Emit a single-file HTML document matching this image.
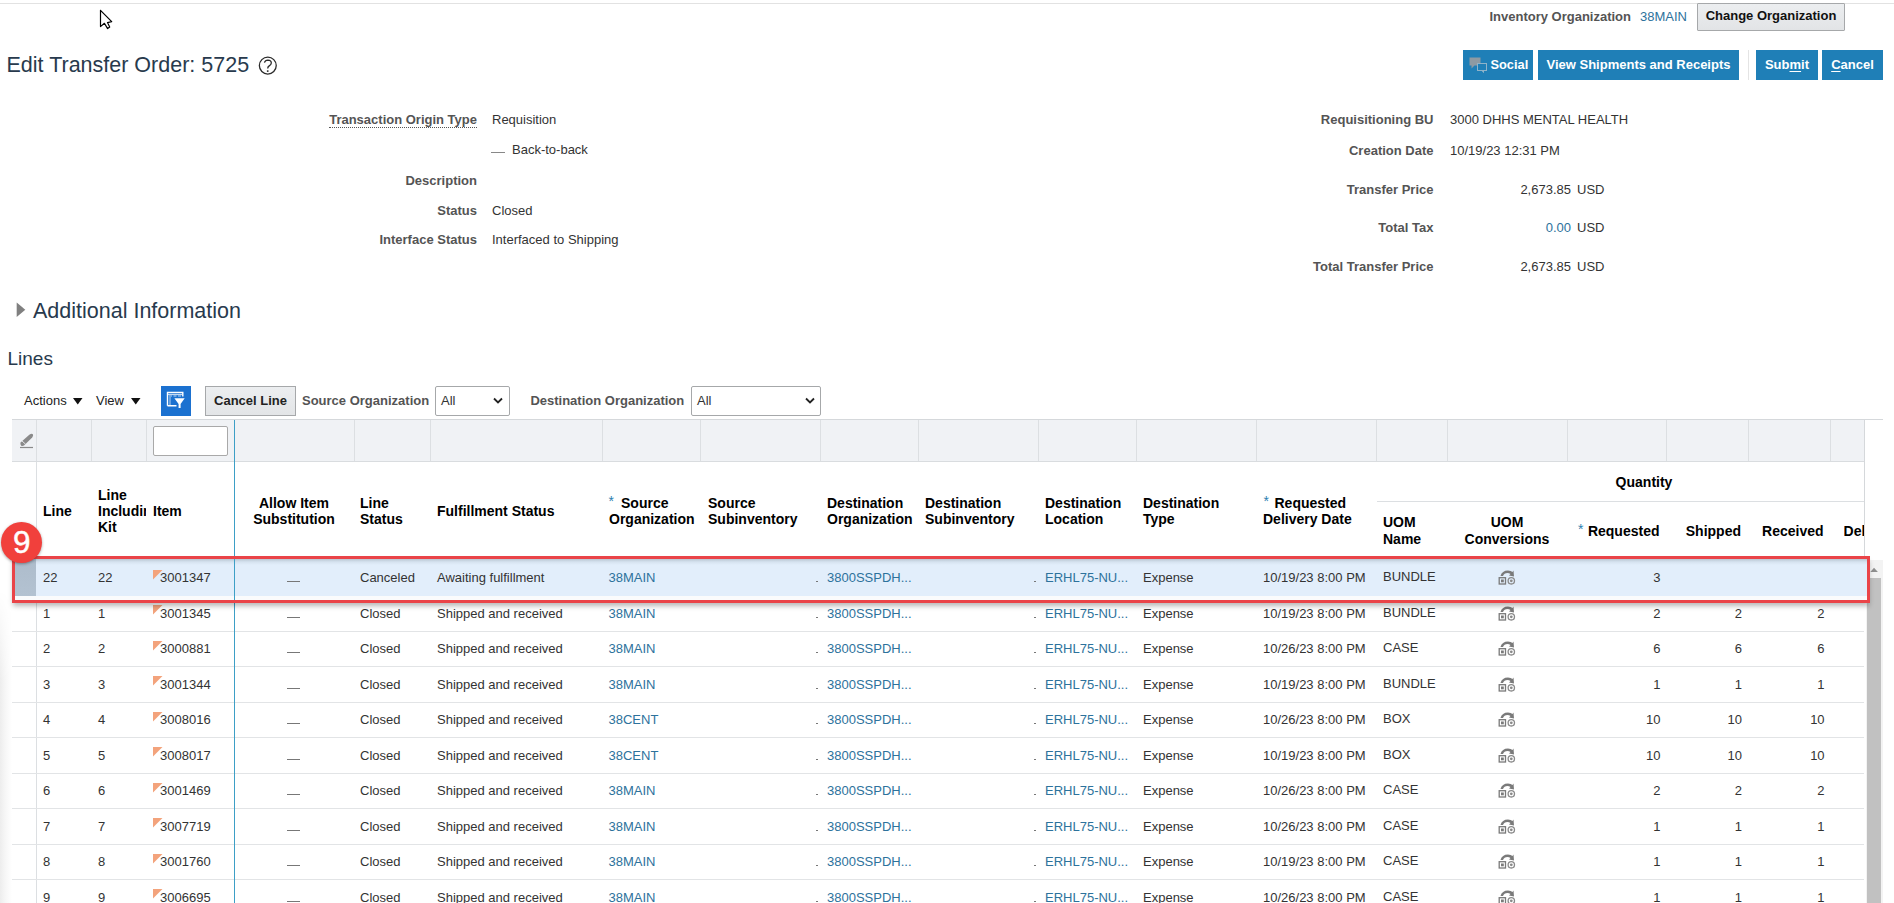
<!DOCTYPE html>
<html><head><meta charset="utf-8"><title>Edit Transfer Order</title>
<style>
html,body{margin:0;padding:0;}
body{width:1894px;height:903px;overflow:hidden;background:#fff;position:relative;font-family:"Liberation Sans", sans-serif;}
.t{position:absolute;white-space:nowrap;line-height:1.1172;}
u{text-decoration:underline;text-underline-offset:2px}
</style></head><body>
<div style="position:absolute;left:0px;top:3px;width:1894px;height:1px;background:#e2e2e2"></div>
<svg style="position:absolute;left:99px;top:9px" width="16" height="22" viewBox="0 0 16 22"><path d="M1.5 1.3 L1.5 17.6 L5.4 14.3 L8.6 19.6 L10.7 18 L8.5 13.6 L12.7 12.7 Z" fill="#fff" stroke="#000" stroke-width="1.2" stroke-linejoin="round"/></svg>
<div class="t" style="left:6.5px;top:53.00px;font-size:21.5px;font-weight:normal;color:#283a4d;line-height:24px;">Edit Transfer Order: 5725</div>
<svg style="position:absolute;left:257px;top:55px" width="22" height="22" viewBox="0 0 22 22"><circle cx="10.8" cy="10.6" r="8.45" fill="none" stroke="#2b2b2b" stroke-width="1.3"/><path d="M7.4 7.6 Q8.2 5.1 10.9 5.1 Q14.3 5.2 14.3 8 Q14.3 9.6 12.2 10.9 Q10.7 11.8 10.7 13.6" fill="none" stroke="#2b2b2b" stroke-width="1.3"/><rect x="9.9" y="15.3" width="1.6" height="1.6" fill="#2b2b2b"/></svg>
<div class="t" style="left:1031px;width:600px;text-align:right;top:9.00px;font-size:13px;font-weight:bold;color:#545454;line-height:15px;">Inventory Organization</div>
<div class="t" style="left:1640px;top:9.00px;font-size:13px;font-weight:normal;color:#2d729c;line-height:15px;">38MAIN</div>
<div style="position:absolute;left:1697px;top:3px;width:146px;height:26px;background:linear-gradient(#eceef0,#e2e4e6);border:1px solid #a6a8aa;border-radius:1px"></div>
<div class="t" style="left:1471px;width:600px;text-align:center;top:8.00px;font-size:13px;font-weight:bold;color:#111;line-height:15px;">Change Organization</div>
<div style="position:absolute;left:1463px;top:50px;width:70px;height:30px;background:#1f7fb7"></div>
<div style="position:absolute;left:1538px;top:50px;width:201px;height:30px;background:#1f7fb7"></div>
<div class="t" style="left:1338.5px;width:600px;text-align:center;top:57.00px;font-size:13px;font-weight:bold;color:#fff;line-height:15px;">View Shipments and Receipts</div>
<div style="position:absolute;left:1756px;top:50px;width:62px;height:30px;background:#1f7fb7"></div>
<div class="t" style="left:1487.0px;width:600px;text-align:center;top:57.00px;font-size:13px;font-weight:bold;color:#fff;line-height:15px;">Sub<u>m</u>it</div>
<div style="position:absolute;left:1822px;top:50px;width:61px;height:30px;background:#1f7fb7"></div>
<div class="t" style="left:1552.5px;width:600px;text-align:center;top:57.00px;font-size:13px;font-weight:bold;color:#fff;line-height:15px;"><u>C</u>ancel</div>
<div class="t" style="left:1490.5px;top:57.00px;font-size:12.8px;font-weight:bold;color:#fff;line-height:15px;">Social</div>
<svg style="position:absolute;left:1468px;top:56px" width="20" height="18" viewBox="0 0 20 18"><path d="M1.5 1.5 h11 v8 h-6 l-3 3 v-3 h-2 z" fill="#8d9aa3"/><rect x="9.5" y="7.5" width="9" height="7" fill="#1f7fb7" stroke="#8fb3c9" stroke-width="1"/><path d="M14 14.5 l1.5 2 l0 -2" fill="none" stroke="#8fb3c9" stroke-width="1"/></svg>
<div style="position:absolute;left:1748px;top:50px;width:1px;height:30px;background:#e4e4e4"></div>
<div class="t" style="left:-123px;width:600px;text-align:right;top:112.00px;font-size:13px;font-weight:bold;color:#545454;line-height:15px;"><span style="border-bottom:1px dotted #555">Transaction Origin Type</span></div>
<div class="t" style="left:-123px;width:600px;text-align:right;top:173.00px;font-size:13px;font-weight:bold;color:#545454;line-height:15px;">Description</div>
<div class="t" style="left:-123px;width:600px;text-align:right;top:203.00px;font-size:13px;font-weight:bold;color:#545454;line-height:15px;">Status</div>
<div class="t" style="left:-123px;width:600px;text-align:right;top:232.00px;font-size:13px;font-weight:bold;color:#545454;line-height:15px;">Interface Status</div>
<div class="t" style="left:492px;top:112.00px;font-size:13px;font-weight:normal;color:#333;line-height:15px;">Requisition</div>
<div style="position:absolute;left:491px;top:152px;width:14px;height:1px;background:#888"></div>
<div class="t" style="left:512px;top:142.00px;font-size:13px;font-weight:normal;color:#333;line-height:15px;">Back-to-back</div>
<div class="t" style="left:492px;top:203.00px;font-size:13px;font-weight:normal;color:#333;line-height:15px;">Closed</div>
<div class="t" style="left:492px;top:232.00px;font-size:13px;font-weight:normal;color:#333;line-height:15px;">Interfaced to Shipping</div>
<div class="t" style="left:833.5px;width:600px;text-align:right;top:112.00px;font-size:13px;font-weight:bold;color:#545454;line-height:15px;">Requisitioning BU</div>
<div class="t" style="left:833.5px;width:600px;text-align:right;top:143.00px;font-size:13px;font-weight:bold;color:#545454;line-height:15px;">Creation Date</div>
<div class="t" style="left:833.5px;width:600px;text-align:right;top:182.00px;font-size:13px;font-weight:bold;color:#545454;line-height:15px;">Transfer Price</div>
<div class="t" style="left:833.5px;width:600px;text-align:right;top:220.00px;font-size:13px;font-weight:bold;color:#545454;line-height:15px;">Total Tax</div>
<div class="t" style="left:833.5px;width:600px;text-align:right;top:259.00px;font-size:13px;font-weight:bold;color:#545454;line-height:15px;">Total Transfer Price</div>
<div class="t" style="left:1450px;top:112.00px;font-size:13px;font-weight:normal;color:#333;line-height:15px;">3000 DHHS MENTAL HEALTH</div>
<div class="t" style="left:1450px;top:143.00px;font-size:13px;font-weight:normal;color:#333;line-height:15px;">10/19/23 12:31 PM</div>
<div class="t" style="left:971px;width:600px;text-align:right;top:182.00px;font-size:13px;font-weight:normal;color:#333;line-height:15px;">2,673.85</div>
<div class="t" style="left:1577px;top:182.00px;font-size:13px;font-weight:normal;color:#333;line-height:15px;">USD</div>
<div class="t" style="left:971px;width:600px;text-align:right;top:220.00px;font-size:13px;font-weight:normal;color:#2d729c;line-height:15px;">0.00</div>
<div class="t" style="left:1577px;top:220.00px;font-size:13px;font-weight:normal;color:#333;line-height:15px;">USD</div>
<div class="t" style="left:971px;width:600px;text-align:right;top:259.00px;font-size:13px;font-weight:normal;color:#333;line-height:15px;">2,673.85</div>
<div class="t" style="left:1577px;top:259.00px;font-size:13px;font-weight:normal;color:#333;line-height:15px;">USD</div>
<svg style="position:absolute;left:15px;top:302px" width="12" height="17"><path d="M1.7 0.4 L10.3 7.7 L1.7 15 Z" fill="#808080"/></svg>
<div class="t" style="left:33px;top:299.00px;font-size:21.5px;font-weight:normal;color:#283a4d;line-height:24px;">Additional Information</div>
<div class="t" style="left:7.5px;top:348.00px;font-size:19px;font-weight:normal;color:#283a4d;line-height:21px;">Lines</div>
<div class="t" style="left:24px;top:393.00px;font-size:13px;font-weight:normal;color:#222;line-height:15px;">Actions</div>
<svg style="position:absolute;left:73px;top:398px" width="10" height="7"><path d="M0 0 H9.5 L4.75 6.6 Z" fill="#111"/></svg>
<div class="t" style="left:96px;top:393.00px;font-size:13px;font-weight:normal;color:#222;line-height:15px;">View</div>
<svg style="position:absolute;left:130.5px;top:398px" width="10" height="7"><path d="M0 0 H9.5 L4.75 6.6 Z" fill="#111"/></svg>
<div style="position:absolute;left:161px;top:386px;width:30px;height:30px;background:#1b71d0"></div>
<svg style="position:absolute;left:161px;top:386px" width="30" height="30" viewBox="0 0 30 30"><path d="M6.5 19.8 V6.5 H21.8 V10.5 M6.5 19.8 H15.5" fill="none" stroke="#fff" stroke-width="1.4"/><path d="M7 8.6 h14" stroke="#e6f0fb" stroke-width="0.9"/><path d="M8 10 h3 M12.5 10 h3 M17 10 h3 M8 12 h2 M8 14 h2 M8 16 h2 M8 18 h2" stroke="#cfe2f7" stroke-width="0.9"/><path d="M13.4 12.2 h10.3 l-4.1 5.7 v4 h-2 v-4 z" fill="#fff"/></svg>
<div style="position:absolute;left:205px;top:386px;width:89px;height:28px;background:linear-gradient(#eceef0,#e3e5e7);border:1px solid #a6a8aa;"></div>
<div class="t" style="left:-49.5px;width:600px;text-align:center;top:393.00px;font-size:13px;font-weight:bold;color:#222;line-height:15px;">Cancel Line</div>
<div class="t" style="left:302px;top:393.00px;font-size:13px;font-weight:bold;color:#545454;line-height:15px;">Source Organization</div>
<div style="position:absolute;left:435px;top:386px;width:73px;height:28px;background:#fff;border:1px solid #a6a8aa;border-radius:2px"></div>
<div class="t" style="left:441px;top:393.00px;font-size:13px;font-weight:normal;color:#333;line-height:15px;">All</div>
<svg style="position:absolute;left:493px;top:397px" width="10" height="8"><path d="M1 1.5 L5 5.5 L9 1.5" fill="none" stroke="#222" stroke-width="1.8"/></svg>
<div class="t" style="left:530.4px;top:393.00px;font-size:13px;font-weight:bold;color:#545454;line-height:15px;">Destination Organization</div>
<div style="position:absolute;left:691px;top:386px;width:128px;height:28px;background:#fff;border:1px solid #a6a8aa;border-radius:2px"></div>
<div class="t" style="left:697px;top:393.00px;font-size:13px;font-weight:normal;color:#333;line-height:15px;">All</div>
<svg style="position:absolute;left:805px;top:397px" width="10" height="8"><path d="M1 1.5 L5 5.5 L9 1.5" fill="none" stroke="#222" stroke-width="1.8"/></svg>
<div style="position:absolute;left:0px;top:590px;width:12px;height:313px;background:linear-gradient(90deg,#ededed,#f6f6f6 5px,#fff 12px);-webkit-mask-image:linear-gradient(to bottom,transparent,#000 90px)"></div>
<div style="position:absolute;left:12px;top:419px;width:1871px;height:1px;background:#d5d8db"></div>
<div style="position:absolute;left:12px;top:420px;width:1852px;height:41px;background:#f0f2f5"></div>
<div style="position:absolute;left:12px;top:461px;width:1852px;height:1px;background:#d9dcdf"></div>
<div style="position:absolute;left:36px;top:420px;width:1px;height:41px;background:#dcdfe2"></div>
<div style="position:absolute;left:91px;top:420px;width:1px;height:41px;background:#dcdfe2"></div>
<div style="position:absolute;left:146px;top:420px;width:1px;height:41px;background:#dcdfe2"></div>
<div style="position:absolute;left:354px;top:420px;width:1px;height:41px;background:#dcdfe2"></div>
<div style="position:absolute;left:430px;top:420px;width:1px;height:41px;background:#dcdfe2"></div>
<div style="position:absolute;left:602px;top:420px;width:1px;height:41px;background:#dcdfe2"></div>
<div style="position:absolute;left:700px;top:420px;width:1px;height:41px;background:#dcdfe2"></div>
<div style="position:absolute;left:820px;top:420px;width:1px;height:41px;background:#dcdfe2"></div>
<div style="position:absolute;left:918px;top:420px;width:1px;height:41px;background:#dcdfe2"></div>
<div style="position:absolute;left:1038px;top:420px;width:1px;height:41px;background:#dcdfe2"></div>
<div style="position:absolute;left:1136px;top:420px;width:1px;height:41px;background:#dcdfe2"></div>
<div style="position:absolute;left:1256px;top:420px;width:1px;height:41px;background:#dcdfe2"></div>
<div style="position:absolute;left:1376px;top:420px;width:1px;height:41px;background:#dcdfe2"></div>
<div style="position:absolute;left:1447px;top:420px;width:1px;height:41px;background:#dcdfe2"></div>
<div style="position:absolute;left:1567px;top:420px;width:1px;height:41px;background:#dcdfe2"></div>
<div style="position:absolute;left:1666px;top:420px;width:1px;height:41px;background:#dcdfe2"></div>
<div style="position:absolute;left:1748px;top:420px;width:1px;height:41px;background:#dcdfe2"></div>
<div style="position:absolute;left:1830px;top:420px;width:1px;height:41px;background:#dcdfe2"></div>
<div style="position:absolute;left:1864px;top:420px;width:1px;height:137px;background:#d5d8db"></div>
<svg style="position:absolute;left:19px;top:432px" width="16" height="17" viewBox="0 0 16 17"><path d="M1.6 10.6 L10.3 2.7 Q12.6 1.2 13.9 2.2 Q14.6 3.6 13.2 5.6 L5 13.6 Q3.3 14.6 2 13.5 Q1 12.2 1.6 10.6 Z" fill="#8a8a8a"/><path d="M2.6 8.6 L6.6 12.2" stroke="#f0f2f5" stroke-width="0.9"/><rect x="1" y="14.9" width="13" height="1.2" fill="#8a8a8a"/></svg>
<div style="position:absolute;left:153px;top:426px;width:73px;height:28px;background:#fff;border:1px solid #a9a9a9;border-radius:2px"></div>
<div style="position:absolute;left:36px;top:462px;width:1px;height:441px;background:#dcdfe2"></div>
<div class="t" style="left:43px;top:503.00px;font-size:14px;font-weight:bold;color:#000;line-height:16px;">Line</div>
<div style="position:absolute;left:98px;top:478px;width:48px;overflow:hidden;height:60px">
<div class="t" style="left:0px;top:calc(-478px + 487.00px);font-size:14px;font-weight:bold;color:#000;line-height:16px;">Line</div>
<div class="t" style="left:0px;top:calc(-478px + 503.00px);font-size:14px;font-weight:bold;color:#000;line-height:16px;">Including</div>
<div class="t" style="left:0px;top:calc(-478px + 519.00px);font-size:14px;font-weight:bold;color:#000;line-height:16px;">Kit</div>
</div>
<div class="t" style="left:153px;top:503.00px;font-size:14px;font-weight:bold;color:#000;line-height:16px;">Item</div>
<div class="t" style="left:-6px;width:600px;text-align:center;top:495.00px;font-size:14px;font-weight:bold;color:#000;line-height:16px;">Allow Item</div>
<div class="t" style="left:-6px;width:600px;text-align:center;top:511.00px;font-size:14px;font-weight:bold;color:#000;line-height:16px;">Substitution</div>
<div class="t" style="left:360px;top:495.00px;font-size:14px;font-weight:bold;color:#000;line-height:16px;">Line</div>
<div class="t" style="left:360px;top:511.00px;font-size:14px;font-weight:bold;color:#000;line-height:16px;">Status</div>
<div class="t" style="left:437px;top:503.00px;font-size:14px;font-weight:bold;color:#000;line-height:16px;">Fulfillment Status</div>
<div class="t" style="left:621px;top:495.00px;font-size:14px;font-weight:bold;color:#000;line-height:16px;">Source</div>
<div class="t" style="left:621px;top:511.00px;font-size:14px;font-weight:bold;color:#000;line-height:16px;"></div>
<div class="t" style="left:609px;top:511.00px;font-size:14px;font-weight:bold;color:#000;line-height:16px;">Organization</div>
<div class="t" style="left:608.5px;top:493.00px;font-size:14px;font-weight:normal;color:#2c7fb0;line-height:16px;">*</div>
<div class="t" style="left:708px;top:495.00px;font-size:14px;font-weight:bold;color:#000;line-height:16px;">Source</div>
<div class="t" style="left:708px;top:511.00px;font-size:14px;font-weight:bold;color:#000;line-height:16px;">Subinventory</div>
<div class="t" style="left:827px;top:495.00px;font-size:14px;font-weight:bold;color:#000;line-height:16px;">Destination</div>
<div class="t" style="left:827px;top:511.00px;font-size:14px;font-weight:bold;color:#000;line-height:16px;">Organization</div>
<div class="t" style="left:925px;top:495.00px;font-size:14px;font-weight:bold;color:#000;line-height:16px;">Destination</div>
<div class="t" style="left:925px;top:511.00px;font-size:14px;font-weight:bold;color:#000;line-height:16px;">Subinventory</div>
<div class="t" style="left:1045px;top:495.00px;font-size:14px;font-weight:bold;color:#000;line-height:16px;">Destination</div>
<div class="t" style="left:1045px;top:511.00px;font-size:14px;font-weight:bold;color:#000;line-height:16px;">Location</div>
<div class="t" style="left:1143px;top:495.00px;font-size:14px;font-weight:bold;color:#000;line-height:16px;">Destination</div>
<div class="t" style="left:1143px;top:511.00px;font-size:14px;font-weight:bold;color:#000;line-height:16px;">Type</div>
<div class="t" style="left:1274.5px;top:495.00px;font-size:14px;font-weight:bold;color:#000;line-height:16px;">Requested</div>
<div class="t" style="left:1263px;top:511.00px;font-size:14px;font-weight:bold;color:#000;line-height:16px;">Delivery Date</div>
<div class="t" style="left:1263.5px;top:493.00px;font-size:14px;font-weight:normal;color:#2c7fb0;line-height:16px;">*</div>
<div class="t" style="left:1344px;width:600px;text-align:center;top:474.00px;font-size:14px;font-weight:bold;color:#000;line-height:16px;">Quantity</div>
<div style="position:absolute;left:1377px;top:501px;width:487px;height:1px;background:#dcdfe2"></div>
<div class="t" style="left:1383px;top:514.00px;font-size:14px;font-weight:bold;color:#000;line-height:16px;">UOM</div>
<div class="t" style="left:1383px;top:531.00px;font-size:14px;font-weight:bold;color:#000;line-height:16px;">Name</div>
<div class="t" style="left:1207px;width:600px;text-align:center;top:514.00px;font-size:14px;font-weight:bold;color:#000;line-height:16px;">UOM</div>
<div class="t" style="left:1207px;width:600px;text-align:center;top:531.00px;font-size:14px;font-weight:bold;color:#000;line-height:16px;">Conversions</div>
<div class="t" style="left:1059.5px;width:600px;text-align:right;top:523.00px;font-size:14px;font-weight:bold;color:#000;line-height:16px;">Requested</div>
<div class="t" style="left:1578px;top:521.00px;font-size:14px;font-weight:normal;color:#2c7fb0;line-height:16px;">*</div>
<div class="t" style="left:1141px;width:600px;text-align:right;top:523.00px;font-size:14px;font-weight:bold;color:#000;line-height:16px;">Shipped</div>
<div class="t" style="left:1223.6px;width:600px;text-align:right;top:523.00px;font-size:14px;font-weight:bold;color:#000;line-height:16px;">Received</div>
<div style="position:absolute;left:1843.6px;top:520px;width:20.4px;overflow:hidden;height:20px">
<div class="t" style="left:0px;top:3.00px;font-size:14px;font-weight:bold;color:#000;line-height:16px;">Del</div>
</div>
<div style="position:absolute;left:1866px;top:560px;width:17px;height:343px;background:#f3f3f3"></div>
<svg style="position:absolute;left:1869px;top:566px" width="12" height="8"><path d="M1.3 6 L5 1.8 L8.9 6 Z" fill="#8f8f8f"/></svg>
<div style="position:absolute;left:1867px;top:578px;width:14px;height:325px;background:#c1c1c1"></div>
<div style="position:absolute;left:15px;top:559px;width:1852px;height:36.5px;background:linear-gradient(#b9c6d2 0px,#d6e3f0 3px,#e2eefb 6px,#e2eefb 100%)"></div>
<div style="position:absolute;left:15px;top:559px;width:21px;height:36.5px;background:linear-gradient(#9fb0c0,#aebdcc 5px,#b3c2d1)"></div>
<div style="position:absolute;left:15px;top:595.5px;width:1852px;height:4.5px;background:#fafbfc"></div>
<div style="position:absolute;left:12px;top:631px;width:1852px;height:1px;background:#e2e4e6"></div>
<div style="position:absolute;left:12px;top:666px;width:1852px;height:1px;background:#e2e4e6"></div>
<div style="position:absolute;left:12px;top:702px;width:1852px;height:1px;background:#e2e4e6"></div>
<div style="position:absolute;left:12px;top:737px;width:1852px;height:1px;background:#e2e4e6"></div>
<div style="position:absolute;left:12px;top:773px;width:1852px;height:1px;background:#e2e4e6"></div>
<div style="position:absolute;left:12px;top:808px;width:1852px;height:1px;background:#e2e4e6"></div>
<div style="position:absolute;left:12px;top:844px;width:1852px;height:1px;background:#e2e4e6"></div>
<div style="position:absolute;left:12px;top:879px;width:1852px;height:1px;background:#e2e4e6"></div>
<div class="t" style="left:43px;top:570.00px;font-size:13px;font-weight:normal;color:#333;line-height:15px;">22</div>
<div class="t" style="left:98px;top:570.00px;font-size:13px;font-weight:normal;color:#333;line-height:15px;">22</div>
<svg style="position:absolute;left:153px;top:569.80px" width="10" height="10"><path d="M0 0 H9.5 L0 9.5 Z" fill="#f3a37c"/></svg>
<div class="t" style="left:160px;top:570.00px;font-size:13px;font-weight:normal;color:#333;line-height:15px;">3001347</div>
<div style="position:absolute;left:287px;top:581.3px;width:13px;height:1.0px;background:#777"></div>
<div class="t" style="left:360px;top:570.00px;font-size:13px;font-weight:normal;color:#333;line-height:15px;">Canceled</div>
<div class="t" style="left:437px;top:570.00px;font-size:13px;font-weight:normal;color:#333;line-height:15px;">Awaiting fulfillment</div>
<div class="t" style="left:608.5px;top:570.00px;font-size:13px;font-weight:normal;color:#2d729c;line-height:15px;">38MAIN</div>
<div style="position:absolute;left:816px;top:581.3px;width:2px;height:1.0px;background:#777"></div>
<div class="t" style="left:827px;top:570.00px;font-size:13px;font-weight:normal;color:#2d729c;line-height:15px;">3800SSPDH...</div>
<div style="position:absolute;left:1034px;top:581.3px;width:2px;height:1.0px;background:#777"></div>
<div class="t" style="left:1045px;top:570.00px;font-size:13px;font-weight:normal;color:#2d729c;line-height:15px;">ERHL75-NU...</div>
<div class="t" style="left:1143px;top:570.00px;font-size:13px;font-weight:normal;color:#333;line-height:15px;">Expense</div>
<div class="t" style="left:1263px;top:570.00px;font-size:13px;font-weight:normal;color:#333;line-height:15px;">10/19/23 8:00 PM</div>
<div class="t" style="left:1383px;top:569.00px;font-size:13px;font-weight:normal;color:#333;line-height:15px;">BUNDLE</div>
<svg style="position:absolute;left:1497.5px;top:569.00px" width="18" height="16" viewBox="0 0 18 16"><path d="M2.5 7 Q4 1.5 10 1.5 Q13 1.5 14.5 3 L15.5 1.5 L16 7.5 L11 6.5 L12.5 5 Q11 4 9.5 4 Q6 4 5 7 Z" fill="#7a7a7a"/><rect x="1.2" y="8.7" width="6.3" height="6.3" fill="none" stroke="#7a7a7a" stroke-width="1.3"/><rect x="3" y="10.5" width="2.8" height="2.8" fill="#7a7a7a"/><circle cx="13.3" cy="11.8" r="3.2" fill="none" stroke="#8a8a8a" stroke-width="1.3"/><circle cx="13.3" cy="11.8" r="1.4" fill="#8a8a8a"/></svg>
<div class="t" style="left:1060.5px;width:600px;text-align:right;top:570.00px;font-size:13px;font-weight:normal;color:#333;line-height:15px;">3</div>
<div class="t" style="left:1142px;width:600px;text-align:right;top:570.00px;font-size:13px;font-weight:normal;color:#333;line-height:15px;"></div>
<div class="t" style="left:1224.6px;width:600px;text-align:right;top:570.00px;font-size:13px;font-weight:normal;color:#333;line-height:15px;"></div>
<div class="t" style="left:43px;top:606.00px;font-size:13px;font-weight:normal;color:#333;line-height:15px;">1</div>
<div class="t" style="left:98px;top:606.00px;font-size:13px;font-weight:normal;color:#333;line-height:15px;">1</div>
<svg style="position:absolute;left:153px;top:605.30px" width="10" height="10"><path d="M0 0 H9.5 L0 9.5 Z" fill="#f3a37c"/></svg>
<div class="t" style="left:160px;top:606.00px;font-size:13px;font-weight:normal;color:#333;line-height:15px;">3001345</div>
<div style="position:absolute;left:287px;top:616.8px;width:13px;height:1.0px;background:#777"></div>
<div class="t" style="left:360px;top:606.00px;font-size:13px;font-weight:normal;color:#333;line-height:15px;">Closed</div>
<div class="t" style="left:437px;top:606.00px;font-size:13px;font-weight:normal;color:#333;line-height:15px;">Shipped and received</div>
<div class="t" style="left:608.5px;top:606.00px;font-size:13px;font-weight:normal;color:#2d729c;line-height:15px;">38MAIN</div>
<div style="position:absolute;left:816px;top:616.8px;width:2px;height:1.0px;background:#777"></div>
<div class="t" style="left:827px;top:606.00px;font-size:13px;font-weight:normal;color:#2d729c;line-height:15px;">3800SSPDH...</div>
<div style="position:absolute;left:1034px;top:616.8px;width:2px;height:1.0px;background:#777"></div>
<div class="t" style="left:1045px;top:606.00px;font-size:13px;font-weight:normal;color:#2d729c;line-height:15px;">ERHL75-NU...</div>
<div class="t" style="left:1143px;top:606.00px;font-size:13px;font-weight:normal;color:#333;line-height:15px;">Expense</div>
<div class="t" style="left:1263px;top:606.00px;font-size:13px;font-weight:normal;color:#333;line-height:15px;">10/19/23 8:00 PM</div>
<div class="t" style="left:1383px;top:605.00px;font-size:13px;font-weight:normal;color:#333;line-height:15px;">BUNDLE</div>
<svg style="position:absolute;left:1497.5px;top:604.50px" width="18" height="16" viewBox="0 0 18 16"><path d="M2.5 7 Q4 1.5 10 1.5 Q13 1.5 14.5 3 L15.5 1.5 L16 7.5 L11 6.5 L12.5 5 Q11 4 9.5 4 Q6 4 5 7 Z" fill="#7a7a7a"/><rect x="1.2" y="8.7" width="6.3" height="6.3" fill="none" stroke="#7a7a7a" stroke-width="1.3"/><rect x="3" y="10.5" width="2.8" height="2.8" fill="#7a7a7a"/><circle cx="13.3" cy="11.8" r="3.2" fill="none" stroke="#8a8a8a" stroke-width="1.3"/><circle cx="13.3" cy="11.8" r="1.4" fill="#8a8a8a"/></svg>
<div class="t" style="left:1060.5px;width:600px;text-align:right;top:606.00px;font-size:13px;font-weight:normal;color:#333;line-height:15px;">2</div>
<div class="t" style="left:1142px;width:600px;text-align:right;top:606.00px;font-size:13px;font-weight:normal;color:#333;line-height:15px;">2</div>
<div class="t" style="left:1224.6px;width:600px;text-align:right;top:606.00px;font-size:13px;font-weight:normal;color:#333;line-height:15px;">2</div>
<div class="t" style="left:43px;top:641.00px;font-size:13px;font-weight:normal;color:#333;line-height:15px;">2</div>
<div class="t" style="left:98px;top:641.00px;font-size:13px;font-weight:normal;color:#333;line-height:15px;">2</div>
<svg style="position:absolute;left:153px;top:640.80px" width="10" height="10"><path d="M0 0 H9.5 L0 9.5 Z" fill="#f3a37c"/></svg>
<div class="t" style="left:160px;top:641.00px;font-size:13px;font-weight:normal;color:#333;line-height:15px;">3000881</div>
<div style="position:absolute;left:287px;top:652.3px;width:13px;height:1.0px;background:#777"></div>
<div class="t" style="left:360px;top:641.00px;font-size:13px;font-weight:normal;color:#333;line-height:15px;">Closed</div>
<div class="t" style="left:437px;top:641.00px;font-size:13px;font-weight:normal;color:#333;line-height:15px;">Shipped and received</div>
<div class="t" style="left:608.5px;top:641.00px;font-size:13px;font-weight:normal;color:#2d729c;line-height:15px;">38MAIN</div>
<div style="position:absolute;left:816px;top:652.3px;width:2px;height:1.0px;background:#777"></div>
<div class="t" style="left:827px;top:641.00px;font-size:13px;font-weight:normal;color:#2d729c;line-height:15px;">3800SSPDH...</div>
<div style="position:absolute;left:1034px;top:652.3px;width:2px;height:1.0px;background:#777"></div>
<div class="t" style="left:1045px;top:641.00px;font-size:13px;font-weight:normal;color:#2d729c;line-height:15px;">ERHL75-NU...</div>
<div class="t" style="left:1143px;top:641.00px;font-size:13px;font-weight:normal;color:#333;line-height:15px;">Expense</div>
<div class="t" style="left:1263px;top:641.00px;font-size:13px;font-weight:normal;color:#333;line-height:15px;">10/26/23 8:00 PM</div>
<div class="t" style="left:1383px;top:640.00px;font-size:13px;font-weight:normal;color:#333;line-height:15px;">CASE</div>
<svg style="position:absolute;left:1497.5px;top:640.00px" width="18" height="16" viewBox="0 0 18 16"><path d="M2.5 7 Q4 1.5 10 1.5 Q13 1.5 14.5 3 L15.5 1.5 L16 7.5 L11 6.5 L12.5 5 Q11 4 9.5 4 Q6 4 5 7 Z" fill="#7a7a7a"/><rect x="1.2" y="8.7" width="6.3" height="6.3" fill="none" stroke="#7a7a7a" stroke-width="1.3"/><rect x="3" y="10.5" width="2.8" height="2.8" fill="#7a7a7a"/><circle cx="13.3" cy="11.8" r="3.2" fill="none" stroke="#8a8a8a" stroke-width="1.3"/><circle cx="13.3" cy="11.8" r="1.4" fill="#8a8a8a"/></svg>
<div class="t" style="left:1060.5px;width:600px;text-align:right;top:641.00px;font-size:13px;font-weight:normal;color:#333;line-height:15px;">6</div>
<div class="t" style="left:1142px;width:600px;text-align:right;top:641.00px;font-size:13px;font-weight:normal;color:#333;line-height:15px;">6</div>
<div class="t" style="left:1224.6px;width:600px;text-align:right;top:641.00px;font-size:13px;font-weight:normal;color:#333;line-height:15px;">6</div>
<div class="t" style="left:43px;top:677.00px;font-size:13px;font-weight:normal;color:#333;line-height:15px;">3</div>
<div class="t" style="left:98px;top:677.00px;font-size:13px;font-weight:normal;color:#333;line-height:15px;">3</div>
<svg style="position:absolute;left:153px;top:676.30px" width="10" height="10"><path d="M0 0 H9.5 L0 9.5 Z" fill="#f3a37c"/></svg>
<div class="t" style="left:160px;top:677.00px;font-size:13px;font-weight:normal;color:#333;line-height:15px;">3001344</div>
<div style="position:absolute;left:287px;top:687.8px;width:13px;height:1.0px;background:#777"></div>
<div class="t" style="left:360px;top:677.00px;font-size:13px;font-weight:normal;color:#333;line-height:15px;">Closed</div>
<div class="t" style="left:437px;top:677.00px;font-size:13px;font-weight:normal;color:#333;line-height:15px;">Shipped and received</div>
<div class="t" style="left:608.5px;top:677.00px;font-size:13px;font-weight:normal;color:#2d729c;line-height:15px;">38MAIN</div>
<div style="position:absolute;left:816px;top:687.8px;width:2px;height:1.0px;background:#777"></div>
<div class="t" style="left:827px;top:677.00px;font-size:13px;font-weight:normal;color:#2d729c;line-height:15px;">3800SSPDH...</div>
<div style="position:absolute;left:1034px;top:687.8px;width:2px;height:1.0px;background:#777"></div>
<div class="t" style="left:1045px;top:677.00px;font-size:13px;font-weight:normal;color:#2d729c;line-height:15px;">ERHL75-NU...</div>
<div class="t" style="left:1143px;top:677.00px;font-size:13px;font-weight:normal;color:#333;line-height:15px;">Expense</div>
<div class="t" style="left:1263px;top:677.00px;font-size:13px;font-weight:normal;color:#333;line-height:15px;">10/19/23 8:00 PM</div>
<div class="t" style="left:1383px;top:676.00px;font-size:13px;font-weight:normal;color:#333;line-height:15px;">BUNDLE</div>
<svg style="position:absolute;left:1497.5px;top:675.50px" width="18" height="16" viewBox="0 0 18 16"><path d="M2.5 7 Q4 1.5 10 1.5 Q13 1.5 14.5 3 L15.5 1.5 L16 7.5 L11 6.5 L12.5 5 Q11 4 9.5 4 Q6 4 5 7 Z" fill="#7a7a7a"/><rect x="1.2" y="8.7" width="6.3" height="6.3" fill="none" stroke="#7a7a7a" stroke-width="1.3"/><rect x="3" y="10.5" width="2.8" height="2.8" fill="#7a7a7a"/><circle cx="13.3" cy="11.8" r="3.2" fill="none" stroke="#8a8a8a" stroke-width="1.3"/><circle cx="13.3" cy="11.8" r="1.4" fill="#8a8a8a"/></svg>
<div class="t" style="left:1060.5px;width:600px;text-align:right;top:677.00px;font-size:13px;font-weight:normal;color:#333;line-height:15px;">1</div>
<div class="t" style="left:1142px;width:600px;text-align:right;top:677.00px;font-size:13px;font-weight:normal;color:#333;line-height:15px;">1</div>
<div class="t" style="left:1224.6px;width:600px;text-align:right;top:677.00px;font-size:13px;font-weight:normal;color:#333;line-height:15px;">1</div>
<div class="t" style="left:43px;top:712.00px;font-size:13px;font-weight:normal;color:#333;line-height:15px;">4</div>
<div class="t" style="left:98px;top:712.00px;font-size:13px;font-weight:normal;color:#333;line-height:15px;">4</div>
<svg style="position:absolute;left:153px;top:711.80px" width="10" height="10"><path d="M0 0 H9.5 L0 9.5 Z" fill="#f3a37c"/></svg>
<div class="t" style="left:160px;top:712.00px;font-size:13px;font-weight:normal;color:#333;line-height:15px;">3008016</div>
<div style="position:absolute;left:287px;top:723.3px;width:13px;height:1.0px;background:#777"></div>
<div class="t" style="left:360px;top:712.00px;font-size:13px;font-weight:normal;color:#333;line-height:15px;">Closed</div>
<div class="t" style="left:437px;top:712.00px;font-size:13px;font-weight:normal;color:#333;line-height:15px;">Shipped and received</div>
<div class="t" style="left:608.5px;top:712.00px;font-size:13px;font-weight:normal;color:#2d729c;line-height:15px;">38CENT</div>
<div style="position:absolute;left:816px;top:723.3px;width:2px;height:1.0px;background:#777"></div>
<div class="t" style="left:827px;top:712.00px;font-size:13px;font-weight:normal;color:#2d729c;line-height:15px;">3800SSPDH...</div>
<div style="position:absolute;left:1034px;top:723.3px;width:2px;height:1.0px;background:#777"></div>
<div class="t" style="left:1045px;top:712.00px;font-size:13px;font-weight:normal;color:#2d729c;line-height:15px;">ERHL75-NU...</div>
<div class="t" style="left:1143px;top:712.00px;font-size:13px;font-weight:normal;color:#333;line-height:15px;">Expense</div>
<div class="t" style="left:1263px;top:712.00px;font-size:13px;font-weight:normal;color:#333;line-height:15px;">10/26/23 8:00 PM</div>
<div class="t" style="left:1383px;top:711.00px;font-size:13px;font-weight:normal;color:#333;line-height:15px;">BOX</div>
<svg style="position:absolute;left:1497.5px;top:711.00px" width="18" height="16" viewBox="0 0 18 16"><path d="M2.5 7 Q4 1.5 10 1.5 Q13 1.5 14.5 3 L15.5 1.5 L16 7.5 L11 6.5 L12.5 5 Q11 4 9.5 4 Q6 4 5 7 Z" fill="#7a7a7a"/><rect x="1.2" y="8.7" width="6.3" height="6.3" fill="none" stroke="#7a7a7a" stroke-width="1.3"/><rect x="3" y="10.5" width="2.8" height="2.8" fill="#7a7a7a"/><circle cx="13.3" cy="11.8" r="3.2" fill="none" stroke="#8a8a8a" stroke-width="1.3"/><circle cx="13.3" cy="11.8" r="1.4" fill="#8a8a8a"/></svg>
<div class="t" style="left:1060.5px;width:600px;text-align:right;top:712.00px;font-size:13px;font-weight:normal;color:#333;line-height:15px;">10</div>
<div class="t" style="left:1142px;width:600px;text-align:right;top:712.00px;font-size:13px;font-weight:normal;color:#333;line-height:15px;">10</div>
<div class="t" style="left:1224.6px;width:600px;text-align:right;top:712.00px;font-size:13px;font-weight:normal;color:#333;line-height:15px;">10</div>
<div class="t" style="left:43px;top:748.00px;font-size:13px;font-weight:normal;color:#333;line-height:15px;">5</div>
<div class="t" style="left:98px;top:748.00px;font-size:13px;font-weight:normal;color:#333;line-height:15px;">5</div>
<svg style="position:absolute;left:153px;top:747.30px" width="10" height="10"><path d="M0 0 H9.5 L0 9.5 Z" fill="#f3a37c"/></svg>
<div class="t" style="left:160px;top:748.00px;font-size:13px;font-weight:normal;color:#333;line-height:15px;">3008017</div>
<div style="position:absolute;left:287px;top:758.8px;width:13px;height:1.0px;background:#777"></div>
<div class="t" style="left:360px;top:748.00px;font-size:13px;font-weight:normal;color:#333;line-height:15px;">Closed</div>
<div class="t" style="left:437px;top:748.00px;font-size:13px;font-weight:normal;color:#333;line-height:15px;">Shipped and received</div>
<div class="t" style="left:608.5px;top:748.00px;font-size:13px;font-weight:normal;color:#2d729c;line-height:15px;">38CENT</div>
<div style="position:absolute;left:816px;top:758.8px;width:2px;height:1.0px;background:#777"></div>
<div class="t" style="left:827px;top:748.00px;font-size:13px;font-weight:normal;color:#2d729c;line-height:15px;">3800SSPDH...</div>
<div style="position:absolute;left:1034px;top:758.8px;width:2px;height:1.0px;background:#777"></div>
<div class="t" style="left:1045px;top:748.00px;font-size:13px;font-weight:normal;color:#2d729c;line-height:15px;">ERHL75-NU...</div>
<div class="t" style="left:1143px;top:748.00px;font-size:13px;font-weight:normal;color:#333;line-height:15px;">Expense</div>
<div class="t" style="left:1263px;top:748.00px;font-size:13px;font-weight:normal;color:#333;line-height:15px;">10/19/23 8:00 PM</div>
<div class="t" style="left:1383px;top:747.00px;font-size:13px;font-weight:normal;color:#333;line-height:15px;">BOX</div>
<svg style="position:absolute;left:1497.5px;top:746.50px" width="18" height="16" viewBox="0 0 18 16"><path d="M2.5 7 Q4 1.5 10 1.5 Q13 1.5 14.5 3 L15.5 1.5 L16 7.5 L11 6.5 L12.5 5 Q11 4 9.5 4 Q6 4 5 7 Z" fill="#7a7a7a"/><rect x="1.2" y="8.7" width="6.3" height="6.3" fill="none" stroke="#7a7a7a" stroke-width="1.3"/><rect x="3" y="10.5" width="2.8" height="2.8" fill="#7a7a7a"/><circle cx="13.3" cy="11.8" r="3.2" fill="none" stroke="#8a8a8a" stroke-width="1.3"/><circle cx="13.3" cy="11.8" r="1.4" fill="#8a8a8a"/></svg>
<div class="t" style="left:1060.5px;width:600px;text-align:right;top:748.00px;font-size:13px;font-weight:normal;color:#333;line-height:15px;">10</div>
<div class="t" style="left:1142px;width:600px;text-align:right;top:748.00px;font-size:13px;font-weight:normal;color:#333;line-height:15px;">10</div>
<div class="t" style="left:1224.6px;width:600px;text-align:right;top:748.00px;font-size:13px;font-weight:normal;color:#333;line-height:15px;">10</div>
<div class="t" style="left:43px;top:783.00px;font-size:13px;font-weight:normal;color:#333;line-height:15px;">6</div>
<div class="t" style="left:98px;top:783.00px;font-size:13px;font-weight:normal;color:#333;line-height:15px;">6</div>
<svg style="position:absolute;left:153px;top:782.80px" width="10" height="10"><path d="M0 0 H9.5 L0 9.5 Z" fill="#f3a37c"/></svg>
<div class="t" style="left:160px;top:783.00px;font-size:13px;font-weight:normal;color:#333;line-height:15px;">3001469</div>
<div style="position:absolute;left:287px;top:794.3px;width:13px;height:1.0px;background:#777"></div>
<div class="t" style="left:360px;top:783.00px;font-size:13px;font-weight:normal;color:#333;line-height:15px;">Closed</div>
<div class="t" style="left:437px;top:783.00px;font-size:13px;font-weight:normal;color:#333;line-height:15px;">Shipped and received</div>
<div class="t" style="left:608.5px;top:783.00px;font-size:13px;font-weight:normal;color:#2d729c;line-height:15px;">38MAIN</div>
<div style="position:absolute;left:816px;top:794.3px;width:2px;height:1.0px;background:#777"></div>
<div class="t" style="left:827px;top:783.00px;font-size:13px;font-weight:normal;color:#2d729c;line-height:15px;">3800SSPDH...</div>
<div style="position:absolute;left:1034px;top:794.3px;width:2px;height:1.0px;background:#777"></div>
<div class="t" style="left:1045px;top:783.00px;font-size:13px;font-weight:normal;color:#2d729c;line-height:15px;">ERHL75-NU...</div>
<div class="t" style="left:1143px;top:783.00px;font-size:13px;font-weight:normal;color:#333;line-height:15px;">Expense</div>
<div class="t" style="left:1263px;top:783.00px;font-size:13px;font-weight:normal;color:#333;line-height:15px;">10/26/23 8:00 PM</div>
<div class="t" style="left:1383px;top:782.00px;font-size:13px;font-weight:normal;color:#333;line-height:15px;">CASE</div>
<svg style="position:absolute;left:1497.5px;top:782.00px" width="18" height="16" viewBox="0 0 18 16"><path d="M2.5 7 Q4 1.5 10 1.5 Q13 1.5 14.5 3 L15.5 1.5 L16 7.5 L11 6.5 L12.5 5 Q11 4 9.5 4 Q6 4 5 7 Z" fill="#7a7a7a"/><rect x="1.2" y="8.7" width="6.3" height="6.3" fill="none" stroke="#7a7a7a" stroke-width="1.3"/><rect x="3" y="10.5" width="2.8" height="2.8" fill="#7a7a7a"/><circle cx="13.3" cy="11.8" r="3.2" fill="none" stroke="#8a8a8a" stroke-width="1.3"/><circle cx="13.3" cy="11.8" r="1.4" fill="#8a8a8a"/></svg>
<div class="t" style="left:1060.5px;width:600px;text-align:right;top:783.00px;font-size:13px;font-weight:normal;color:#333;line-height:15px;">2</div>
<div class="t" style="left:1142px;width:600px;text-align:right;top:783.00px;font-size:13px;font-weight:normal;color:#333;line-height:15px;">2</div>
<div class="t" style="left:1224.6px;width:600px;text-align:right;top:783.00px;font-size:13px;font-weight:normal;color:#333;line-height:15px;">2</div>
<div class="t" style="left:43px;top:819.00px;font-size:13px;font-weight:normal;color:#333;line-height:15px;">7</div>
<div class="t" style="left:98px;top:819.00px;font-size:13px;font-weight:normal;color:#333;line-height:15px;">7</div>
<svg style="position:absolute;left:153px;top:818.30px" width="10" height="10"><path d="M0 0 H9.5 L0 9.5 Z" fill="#f3a37c"/></svg>
<div class="t" style="left:160px;top:819.00px;font-size:13px;font-weight:normal;color:#333;line-height:15px;">3007719</div>
<div style="position:absolute;left:287px;top:829.8px;width:13px;height:1.0px;background:#777"></div>
<div class="t" style="left:360px;top:819.00px;font-size:13px;font-weight:normal;color:#333;line-height:15px;">Closed</div>
<div class="t" style="left:437px;top:819.00px;font-size:13px;font-weight:normal;color:#333;line-height:15px;">Shipped and received</div>
<div class="t" style="left:608.5px;top:819.00px;font-size:13px;font-weight:normal;color:#2d729c;line-height:15px;">38MAIN</div>
<div style="position:absolute;left:816px;top:829.8px;width:2px;height:1.0px;background:#777"></div>
<div class="t" style="left:827px;top:819.00px;font-size:13px;font-weight:normal;color:#2d729c;line-height:15px;">3800SSPDH...</div>
<div style="position:absolute;left:1034px;top:829.8px;width:2px;height:1.0px;background:#777"></div>
<div class="t" style="left:1045px;top:819.00px;font-size:13px;font-weight:normal;color:#2d729c;line-height:15px;">ERHL75-NU...</div>
<div class="t" style="left:1143px;top:819.00px;font-size:13px;font-weight:normal;color:#333;line-height:15px;">Expense</div>
<div class="t" style="left:1263px;top:819.00px;font-size:13px;font-weight:normal;color:#333;line-height:15px;">10/26/23 8:00 PM</div>
<div class="t" style="left:1383px;top:818.00px;font-size:13px;font-weight:normal;color:#333;line-height:15px;">CASE</div>
<svg style="position:absolute;left:1497.5px;top:817.50px" width="18" height="16" viewBox="0 0 18 16"><path d="M2.5 7 Q4 1.5 10 1.5 Q13 1.5 14.5 3 L15.5 1.5 L16 7.5 L11 6.5 L12.5 5 Q11 4 9.5 4 Q6 4 5 7 Z" fill="#7a7a7a"/><rect x="1.2" y="8.7" width="6.3" height="6.3" fill="none" stroke="#7a7a7a" stroke-width="1.3"/><rect x="3" y="10.5" width="2.8" height="2.8" fill="#7a7a7a"/><circle cx="13.3" cy="11.8" r="3.2" fill="none" stroke="#8a8a8a" stroke-width="1.3"/><circle cx="13.3" cy="11.8" r="1.4" fill="#8a8a8a"/></svg>
<div class="t" style="left:1060.5px;width:600px;text-align:right;top:819.00px;font-size:13px;font-weight:normal;color:#333;line-height:15px;">1</div>
<div class="t" style="left:1142px;width:600px;text-align:right;top:819.00px;font-size:13px;font-weight:normal;color:#333;line-height:15px;">1</div>
<div class="t" style="left:1224.6px;width:600px;text-align:right;top:819.00px;font-size:13px;font-weight:normal;color:#333;line-height:15px;">1</div>
<div class="t" style="left:43px;top:854.00px;font-size:13px;font-weight:normal;color:#333;line-height:15px;">8</div>
<div class="t" style="left:98px;top:854.00px;font-size:13px;font-weight:normal;color:#333;line-height:15px;">8</div>
<svg style="position:absolute;left:153px;top:853.80px" width="10" height="10"><path d="M0 0 H9.5 L0 9.5 Z" fill="#f3a37c"/></svg>
<div class="t" style="left:160px;top:854.00px;font-size:13px;font-weight:normal;color:#333;line-height:15px;">3001760</div>
<div style="position:absolute;left:287px;top:865.3px;width:13px;height:1.0px;background:#777"></div>
<div class="t" style="left:360px;top:854.00px;font-size:13px;font-weight:normal;color:#333;line-height:15px;">Closed</div>
<div class="t" style="left:437px;top:854.00px;font-size:13px;font-weight:normal;color:#333;line-height:15px;">Shipped and received</div>
<div class="t" style="left:608.5px;top:854.00px;font-size:13px;font-weight:normal;color:#2d729c;line-height:15px;">38MAIN</div>
<div style="position:absolute;left:816px;top:865.3px;width:2px;height:1.0px;background:#777"></div>
<div class="t" style="left:827px;top:854.00px;font-size:13px;font-weight:normal;color:#2d729c;line-height:15px;">3800SSPDH...</div>
<div style="position:absolute;left:1034px;top:865.3px;width:2px;height:1.0px;background:#777"></div>
<div class="t" style="left:1045px;top:854.00px;font-size:13px;font-weight:normal;color:#2d729c;line-height:15px;">ERHL75-NU...</div>
<div class="t" style="left:1143px;top:854.00px;font-size:13px;font-weight:normal;color:#333;line-height:15px;">Expense</div>
<div class="t" style="left:1263px;top:854.00px;font-size:13px;font-weight:normal;color:#333;line-height:15px;">10/19/23 8:00 PM</div>
<div class="t" style="left:1383px;top:853.00px;font-size:13px;font-weight:normal;color:#333;line-height:15px;">CASE</div>
<svg style="position:absolute;left:1497.5px;top:853.00px" width="18" height="16" viewBox="0 0 18 16"><path d="M2.5 7 Q4 1.5 10 1.5 Q13 1.5 14.5 3 L15.5 1.5 L16 7.5 L11 6.5 L12.5 5 Q11 4 9.5 4 Q6 4 5 7 Z" fill="#7a7a7a"/><rect x="1.2" y="8.7" width="6.3" height="6.3" fill="none" stroke="#7a7a7a" stroke-width="1.3"/><rect x="3" y="10.5" width="2.8" height="2.8" fill="#7a7a7a"/><circle cx="13.3" cy="11.8" r="3.2" fill="none" stroke="#8a8a8a" stroke-width="1.3"/><circle cx="13.3" cy="11.8" r="1.4" fill="#8a8a8a"/></svg>
<div class="t" style="left:1060.5px;width:600px;text-align:right;top:854.00px;font-size:13px;font-weight:normal;color:#333;line-height:15px;">1</div>
<div class="t" style="left:1142px;width:600px;text-align:right;top:854.00px;font-size:13px;font-weight:normal;color:#333;line-height:15px;">1</div>
<div class="t" style="left:1224.6px;width:600px;text-align:right;top:854.00px;font-size:13px;font-weight:normal;color:#333;line-height:15px;">1</div>
<div class="t" style="left:43px;top:890.00px;font-size:13px;font-weight:normal;color:#333;line-height:15px;">9</div>
<div class="t" style="left:98px;top:890.00px;font-size:13px;font-weight:normal;color:#333;line-height:15px;">9</div>
<svg style="position:absolute;left:153px;top:889.30px" width="10" height="10"><path d="M0 0 H9.5 L0 9.5 Z" fill="#f3a37c"/></svg>
<div class="t" style="left:160px;top:890.00px;font-size:13px;font-weight:normal;color:#333;line-height:15px;">3006695</div>
<div style="position:absolute;left:287px;top:900.8px;width:13px;height:1.0px;background:#777"></div>
<div class="t" style="left:360px;top:890.00px;font-size:13px;font-weight:normal;color:#333;line-height:15px;">Closed</div>
<div class="t" style="left:437px;top:890.00px;font-size:13px;font-weight:normal;color:#333;line-height:15px;">Shipped and received</div>
<div class="t" style="left:608.5px;top:890.00px;font-size:13px;font-weight:normal;color:#2d729c;line-height:15px;">38MAIN</div>
<div style="position:absolute;left:816px;top:900.8px;width:2px;height:1.0px;background:#777"></div>
<div class="t" style="left:827px;top:890.00px;font-size:13px;font-weight:normal;color:#2d729c;line-height:15px;">3800SSPDH...</div>
<div style="position:absolute;left:1034px;top:900.8px;width:2px;height:1.0px;background:#777"></div>
<div class="t" style="left:1045px;top:890.00px;font-size:13px;font-weight:normal;color:#2d729c;line-height:15px;">ERHL75-NU...</div>
<div class="t" style="left:1143px;top:890.00px;font-size:13px;font-weight:normal;color:#333;line-height:15px;">Expense</div>
<div class="t" style="left:1263px;top:890.00px;font-size:13px;font-weight:normal;color:#333;line-height:15px;">10/26/23 8:00 PM</div>
<div class="t" style="left:1383px;top:889.00px;font-size:13px;font-weight:normal;color:#333;line-height:15px;">CASE</div>
<svg style="position:absolute;left:1497.5px;top:888.50px" width="18" height="16" viewBox="0 0 18 16"><path d="M2.5 7 Q4 1.5 10 1.5 Q13 1.5 14.5 3 L15.5 1.5 L16 7.5 L11 6.5 L12.5 5 Q11 4 9.5 4 Q6 4 5 7 Z" fill="#7a7a7a"/><rect x="1.2" y="8.7" width="6.3" height="6.3" fill="none" stroke="#7a7a7a" stroke-width="1.3"/><rect x="3" y="10.5" width="2.8" height="2.8" fill="#7a7a7a"/><circle cx="13.3" cy="11.8" r="3.2" fill="none" stroke="#8a8a8a" stroke-width="1.3"/><circle cx="13.3" cy="11.8" r="1.4" fill="#8a8a8a"/></svg>
<div class="t" style="left:1060.5px;width:600px;text-align:right;top:890.00px;font-size:13px;font-weight:normal;color:#333;line-height:15px;">1</div>
<div class="t" style="left:1142px;width:600px;text-align:right;top:890.00px;font-size:13px;font-weight:normal;color:#333;line-height:15px;">1</div>
<div class="t" style="left:1224.6px;width:600px;text-align:right;top:890.00px;font-size:13px;font-weight:normal;color:#333;line-height:15px;">1</div>
<div style="position:absolute;left:234px;top:420px;width:1px;height:483px;background:#3d9fc6"></div>
<div style="position:absolute;left:12px;top:556px;width:1851.6px;height:40.5px;border:3px solid #ea4448;box-shadow:0 4px 5px -1px rgba(0,0,0,0.28);"></div>
<div style="position:absolute;left:1.2px;top:522px;width:40.8px;height:40.8px;border-radius:50%;background:#f1403c;box-shadow:0 1px 3px rgba(0,0,0,0.35)"></div>
<div class="t" style="left:-278.3px;width:600px;text-align:center;top:524.00px;font-size:31.5px;font-weight:normal;color:#fff;line-height:36px;-webkit-text-stroke:0.5px #fff;">9</div>
</body></html>
